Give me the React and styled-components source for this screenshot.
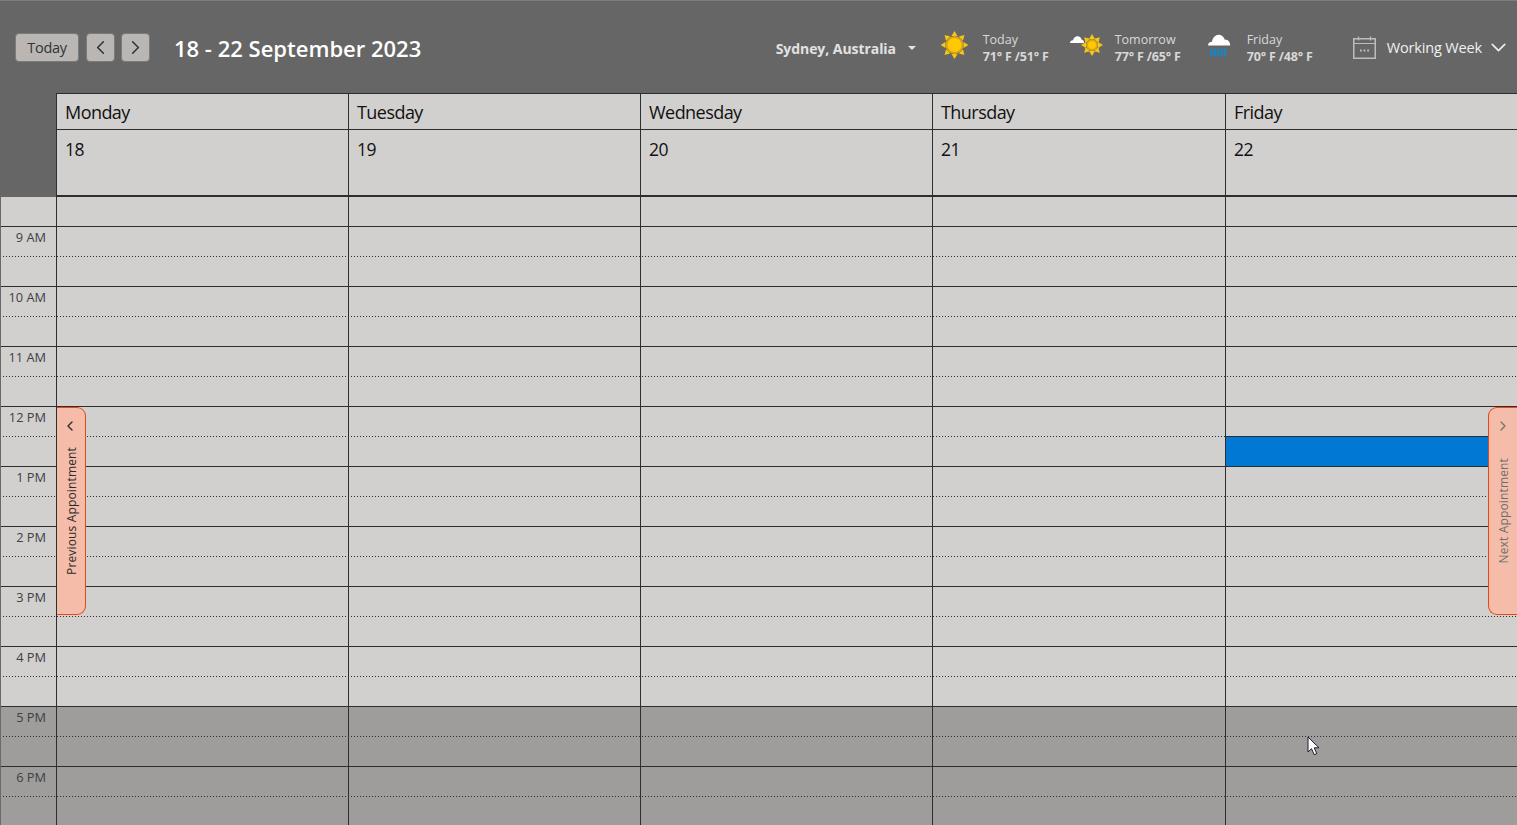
import React from "react";
import styled, { createGlobalStyle } from "styled-components";
import { ChevronLeft, ChevronRight, ChevronDown } from "lucide-react";

const days = [
  { name: "Monday", date: 18 },
  { name: "Tuesday", date: 19 },
  { name: "Wednesday", date: 20 },
  { name: "Thursday", date: 21 },
  { name: "Friday", date: 22 },
];

const hours = { 1: "9 AM", 3: "10 AM", 5: "11 AM", 7: "12 PM", 9: "1 PM", 11: "2 PM", 13: "3 PM", 15: "4 PM", 17: "5 PM", 19: "6 PM" };
const rows = Array.from({ length: 21 }, (_, i) => i);

const COLUMNS = "57px 292px 292px 292px 293px 292px";
const LINE = "#2e2e2e";

const Global = createGlobalStyle`
  html, body {
    margin: 0;
    height: 100%;
    overflow: hidden;
    background: #666666;
    font-family: "Open Sans", "Noto Sans", sans-serif;
  }
`;

const Page = styled.div`
  position: relative;
  width: 1517px;
  height: 825px;
  overflow: hidden;
`;

const Toolbar = styled.div`
  display: flex;
  align-items: center;
  height: 93px;
  box-sizing: border-box;
  padding: 0 6px 0 15px;
  background: #666666;
  border-top: 1px solid #7d7d7d;
`;

const NavButton = styled.button`
  display: flex;
  align-items: center;
  justify-content: center;
  box-sizing: border-box;
  width: ${(p) => p.$width}px;
  height: 29px;
  margin-right: ${(p) => p.$gap}px;
  padding: 0;
  background: #b9b6b4;
  border: 1px solid #7b7b7b;
  border-radius: 4px;
  color: #333333;
  font: 14.5px "Open Sans", sans-serif;
  letter-spacing: -0.3px;
`;

const Title = styled.div`
  margin: 2px 0 0 24px;
  color: #ffffff;
  font-size: 22px;
  font-weight: 600;
  white-space: nowrap;
`;

const RightGroup = styled.div`
  display: flex;
  align-items: center;
  margin-left: auto;
`;

const Location = styled.div`
  display: flex;
  align-items: center;
  width: 165px;
  margin-top: 2px;
  color: #e2e2e2;
  font-size: 14px;
  font-weight: 700;
  letter-spacing: -0.06px;
  white-space: nowrap;
`;

const Caret = styled.span`
  margin-left: 12px;
  border-left: 4px solid transparent;
  border-right: 4px solid transparent;
  border-top: 4px solid #e2e2e2;
`;

const Weather = styled.div`
  display: flex;
  align-items: center;
  width: ${(p) => p.$width}px;
`;

const WeatherIcon = styled.svg`
  flex: none;
  overflow: visible;
  margin-right: ${(p) => p.$right}px;
`;

const WeatherText = styled.div`
  display: flex;
  flex-direction: column;
  margin-top: 1px;
  color: #d8d8d8;
  font-size: 12.5px;
  line-height: 17px;
  white-space: nowrap;
`;

const Temps = styled.span`
  font-weight: 700;
  letter-spacing: -0.15px;
`;

const ViewPicker = styled.div`
  display: flex;
  align-items: center;
  color: #f0f0f0;
  font-size: 14.5px;
  letter-spacing: -0.15px;
  white-space: nowrap;
`;

const CalendarIcon = styled.svg`
  margin-right: 11px;
`;

const PickerChevron = styled(ChevronDown)`
  margin-left: 4px;
`;

const HeaderRow = styled.div`
  display: grid;
  grid-template-columns: ${COLUMNS};
  height: ${(p) => p.$height}px;
  box-sizing: border-box;
  border-bottom: ${(p) => p.$rule}px solid ${LINE};
`;

const Corner = styled.div`
  background: #666666;
  border-right: 1px solid ${LINE};
  margin-bottom: -${(p) => p.$rule}px;
`;

const HeaderCell = styled.div`
  box-sizing: border-box;
  background: #d1d0ce;
  border-top: ${(p) => (p.$top ? `1px solid ${LINE}` : "none")};
  border-right: 1px solid ${LINE};
  padding: ${(p) => (p.$top ? 5 : 6)}px 0 0 8px;
  color: #111111;
  font-size: 18px;
  line-height: 26px;
  letter-spacing: -0.55px;
`;

const DateText = styled.span`
  font-size: 17.5px;
`;

const Row = styled.div`
  display: grid;
  grid-template-columns: ${COLUMNS};
  height: 30px;
  background-color: ${(p) => (p.$off ? "#9e9d9b" : "#d1d0ce")};
  background-repeat: ${(p) => (p.$dotted ? "repeat-x" : "no-repeat")};
  background-position: 0 100%;
  background-size: ${(p) => (p.$dotted ? "3px 1px" : "100% 1px")};
  background-image: ${(p) =>
    p.$dotted
      ? `linear-gradient(90deg, ${LINE} 1px, transparent 1px)`
      : `linear-gradient(${LINE}, ${LINE})`};
`;

const TimeCell = styled.div`
  box-sizing: border-box;
  border-left: 1px solid #6a6a6a;
  border-right: 1px solid ${LINE};
  padding: 1px 10px 0 0;
  color: #3f3f46;
  font-size: 12.8px;
  line-height: 18px;
  text-align: right;
  white-space: nowrap;
`;

const SlotCell = styled.div`
  border-right: 1px solid ${LINE};
  ${(p) => p.$busy && `
    background: #0078d4;
    height: 29px;
    box-shadow: 0 -1px 0 ${LINE};
  `}
`;

const Tab = styled.div`
  position: absolute;
  top: 407px;
  ${(p) => (p.$next ? "right: 0;" : "left: 57px;")}
  display: flex;
  flex-direction: column;
  align-items: center;
  box-sizing: border-box;
  width: 29px;
  height: 208px;
  padding-top: 10px;
  background: #f5bda9;
  border: 1px solid #e5481a;
  border-${(p) => (p.$next ? "right" : "left")}: none;
  border-radius: ${(p) => (p.$next ? "9px 0 0 9px" : "0 9px 9px 0")};
  color: ${(p) => (p.$next ? "#6f6f6f" : "#2c2c2c")};
`;

const TabChevron = styled.svg`
  margin-left: ${(p) => p.$shift}px;
`;

const TabLabel = styled.span`
  margin-top: ${(p) => p.$top}px;
  writing-mode: vertical-rl;
  transform: rotate(180deg);
  font-size: 12px;
  letter-spacing: 0.15px;
  white-space: nowrap;
`;

const Pointer = styled.svg`
  position: absolute;
  left: 1307px;
  top: 736px;
`;

function Sun({ size, cx, cy }) {
  const rays = [0, 45, 90, 135, 180, 225, 270, 315];
  return (
    <g>
      {rays.map((a) => (
        <polygon
          key={a}
          points={`${cx - 3},${cy - size + 5} ${cx},${cy - size} ${cx + 3},${cy - size + 5}`}
          fill="#f5c518"
          transform={`rotate(${a} ${cx} ${cy})`}
        />
      ))}
      <circle cx={cx} cy={cy} r={size - 5} fill="#d9a514" />
      <circle cx={cx} cy={cy} r={size - 7} fill="#ffc800" />
    </g>
  );
}

export default function App() {
  return (
    <Page>
      <Global />
      <Toolbar>
        <NavButton $width={64} $gap={7}>Today</NavButton>
        <NavButton $width={29} $gap={6}><ChevronLeft size={23} strokeWidth={1.6} /></NavButton>
        <NavButton $width={29} $gap={0}><ChevronRight size={23} strokeWidth={1.6} /></NavButton>
        <Title>18 - 22 September 2023</Title>
        <RightGroup>
          <Location>
            Sydney, Australia
            <Caret />
          </Location>
          <Weather $width={128}>
            <WeatherIcon width="28" height="28" viewBox="0 0 28 28" $right={14}>
              <Sun size={14} cx={13.5} cy={12} />
            </WeatherIcon>
            <WeatherText>
              <span>Today</span>
              <Temps>71° F /51° F</Temps>
            </WeatherText>
          </Weather>
          <Weather $width={138}>
            <WeatherIcon width="35" height="28" viewBox="0 0 35 28" $right={11}>
              <path d="M1 10c0-1.800 1.400-2.800 3-2.800.7-2.600 2.500-4 4.500-4 2.200 0 3.800 1.500 4.200 3.600 1.300 0 2.300 1.200 2.300 3.200z" fill="#ffffff" />
              <Sun size={11} cx={23} cy={12} />
            </WeatherIcon>
            <WeatherText>
              <span>Tomorrow</span>
              <Temps>77° F /65° F</Temps>
            </WeatherText>
          </Weather>
          <Weather $width={146}>
            <WeatherIcon width="25" height="28" viewBox="0 0 25 28" $right={15}>
              <path d="M1 12.500c0-2.300 1.800-3.800 4-3.800.6-4 3.400-7 6.600-7 3 0 5.500 2 6.200 5 2.900-.3 5.400 1.700 5.400 5.800z" fill="#ffffff" />
              <path d="M3 15.500h2.400v8H3zM6.500 15.500h2.400v8H6.500zM10 15.500h2.400v8H10zM13.500 15.500h2.400v8h-2.400zM17 15.500h2.400v8H17z" fill="#1f83bd" />
            </WeatherIcon>
            <WeatherText>
              <span>Friday</span>
              <Temps>70° F /48° F</Temps>
            </WeatherText>
          </Weather>
          <ViewPicker>
            <CalendarIcon width="23" height="23" viewBox="0 0 23 23" fill="none" stroke="#bdbdbd">
              <rect x="0.750" y="2.750" width="21.500" height="19.500" strokeWidth="1.500" />
              <path d="M1 7.500h21M5.500 0.500v4M17.500 0.500v4" strokeWidth="1.200" />
              <path d="M7 14.500h1.800M10.600 14.500h1.800M14.200 14.500h1.800" strokeWidth="1.800" />
            </CalendarIcon>
            Working Week
            <PickerChevron size={25} strokeWidth={1.5} />
          </ViewPicker>
        </RightGroup>
      </Toolbar>

      <HeaderRow $height={37} $rule={1}>
        <Corner $rule={1} />
        {days.map((d) => (
          <HeaderCell key={d.name} $top>{d.name}</HeaderCell>
        ))}
      </HeaderRow>
      <HeaderRow $height={67} $rule={2}>
        <Corner $rule={2} />
        {days.map((d) => (
          <HeaderCell key={d.date}><DateText>{d.date}</DateText></HeaderCell>
        ))}
      </HeaderRow>

      {rows.map((r) => (
        <Row key={r} $dotted={r % 2 === 1} $off={r >= 17}>
          <TimeCell>{hours[r]}</TimeCell>
          {days.map((d) => (
            <SlotCell key={d.name} $busy={r === 8 && d.name === "Friday"} />
          ))}
        </Row>
      ))}

      <Tab>
        <TabChevron as={ChevronLeft} size={16} strokeWidth={2} $shift={-2} />
        <TabLabel $top={13}>Previous Appointment</TabLabel>
      </Tab>
      <Tab $next>
        <TabChevron as={ChevronRight} size={16} strokeWidth={1.8} $shift={0} />
        <TabLabel $top={24}>Next Appointment</TabLabel>
      </Tab>

      <Pointer width="14" height="20" viewBox="0 0 14 20">
        <path d="M1 1v15l3.500-3.300 2.700 6 2.600-1.100-2.600-5.800h4.800z" fill="#ffffff" stroke="#1c1c2c" strokeWidth="1" />
      </Pointer>
    </Page>
  );
}
